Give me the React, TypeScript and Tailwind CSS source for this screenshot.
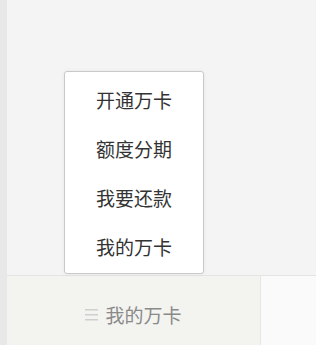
import React from 'react';

const menuItems = ['开通万卡', '额度分期', '我要还款', '我的万卡'];

const font = { fontFamily: '"Noto Sans CJK SC", "Noto Sans", sans-serif' };

function MenuIcon() {
  return (
    <svg width="13" height="12" viewBox="0 0 13 12" className="shrink-0">
      <rect x="0" y="0" width="13" height="1.5" fill="#cfcfcf" />
      <rect x="0" y="5" width="13" height="1.5" fill="#cfcfcf" />
      <rect x="0" y="10" width="13" height="1.5" fill="#cfcfcf" />
    </svg>
  );
}

export default function App() {
  return (
    <div className="flex w-[316px] h-[345px] overflow-hidden bg-[#e8e8e8]" style={font}>
      <div className="w-[7px] shrink-0" />
      <div className="relative flex flex-1 flex-col">
        {/* main area */}
        <div className="h-[276px] bg-[#f4f4f4] border-b border-[#e4e4e4]" />

        {/* bottom tab bar */}
        <div className="flex flex-1">
          <div className="flex w-[254px] items-center justify-center gap-[7px] bg-[#f3f3ef] pt-[8px] border-r border-[#e6e6e6]">
            <MenuIcon />
            <span className="text-[19px] leading-none text-[#8a8a8a]">我的万卡</span>
          </div>
          <div className="flex-1 bg-[#fafafa]" />
        </div>

        {/* popup menu */}
        <div className="absolute left-[57px] top-[71px] w-[140px] rounded-[3px] border border-[#c9c9c9] bg-white pt-[4px] pb-[1px] shadow-[0_0_4px_rgba(0,0,0,0.06)]">
          {menuItems.map((label) => (
            <div key={label} className="flex h-[49px] items-center justify-center text-[19px] text-[#333]">
              {label}
            </div>
          ))}
        </div>
      </div>
    </div>
  );
}
